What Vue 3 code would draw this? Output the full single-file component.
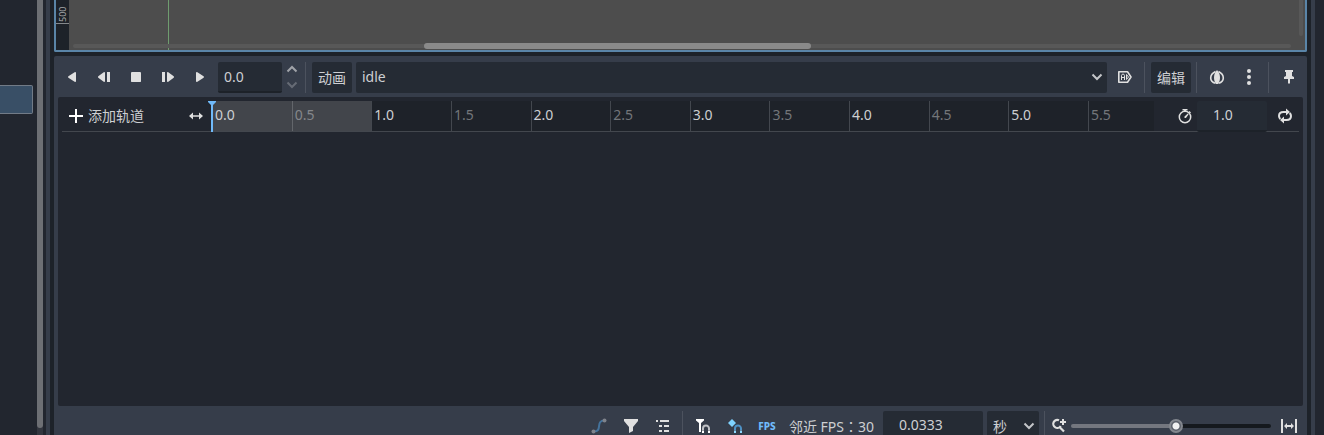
<script setup>
import { computed, ref } from 'vue'

const VISIBLE_SECONDS = 5.915
const STEP = 0.5

const position = ref('0.0')
const length = ref('1.0')
const snap = ref('0.0333')
const zoom = ref(527)
const animation = ref('idle')
const unit = ref('秒')

const ticks = Array.from({ length: 12 }, (_, i) => i * STEP)

const tickColumns = computed(() =>
  ticks.map((t) => `minmax(0, ${Math.min(STEP, VISIBLE_SECONDS - t).toFixed(3)}fr)`).join(' ')
)

const isInside = (t) => t < Number(length.value)

const zoomFill = computed(() => `${zoom.value / 10}%`)

const playButtons = [
  { label: '倒放', path: 'M12 3.4v9.2q-.6.6-1.4.2L4.4 8.8q-.8-.8 0-1.6l6.2-4q.8-.4 1.4.2z' },
  { label: '上一帧', path: 'M9 3.4v9.2q-.6.6-1.3.2L2.3 8.8q-.7-.8 0-1.6l5.4-4q.7-.4 1.3.2zM11 3h3v10h-3z' },
  { label: '停止', path: 'M3.5 3h9l.5.5v9l-.5.5h-9l-.5-.5v-9z' },
  { label: '下一帧', path: 'M7 3.4v9.2q.6.6 1.3.2l5.4-4q.7-.8 0-1.6l-5.4-4Q7.6 2.8 7 3.4zM2 3h3v10H2z' },
  { label: '播放', path: 'M4 3.4v9.2q.6.6 1.4.2l6.2-4q.8-.8 0-1.6l-6.2-4Q4.6 2.8 4 3.4z' },
]
</script>

<template>
  <div class="editor">
    <aside class="dock dock-left">
      <div class="dock-item"></div>
      <div class="dock-scroll"><div class="dock-thumb"></div></div>
    </aside>

    <main class="center">
      <section class="viewport">
        <div class="v-ruler"><span>500</span></div>
        <div class="canvas">
          <div class="axis"></div>
          <div class="h-scroll"><div class="h-thumb"></div></div>
          <div class="v-scroll"></div>
        </div>
      </section>

      <section class="panel">
        <div class="bar">
          <button v-for="b in playButtons" :key="b.label" class="icon-btn" :aria-label="b.label">
            <svg viewBox="0 0 16 16"><path :d="b.path" /></svg>
          </button>
          <div class="spin">
            <input v-model="position" class="field seek" aria-label="位置" />
            <div class="spin-arrows">
              <button aria-label="增加"><svg viewBox="0 0 12 8"><path d="M1.500 6.500L6 2l4.500 4.500" /></svg></button>
              <button class="dim" aria-label="减少"><svg viewBox="0 0 12 8"><path d="M1.500 1.500L6 6l4.500-4.500" /></svg></button>
            </div>
          </div>
          <i class="sep"></i>
          <button class="text-btn">动画</button>
          <div class="select grow">
            <select v-model="animation" aria-label="动画列表"><option>idle</option></select>
            <svg class="chevron" viewBox="0 0 16 16"><path d="M3.500 5.500L8 10l4.500-4.500" /></svg>
          </div>
          <button class="icon-btn" aria-label="自动播放">
            <svg viewBox="0 0 16 16">
              <path d="M1.800 2.800h8.700L14 8l-3.500 5.200H1.800z" fill="none" stroke="#e0e0e0" stroke-width="1.600" stroke-linejoin="round" />
              <path d="M4.500 11V6.500l1-1.500h1l1 1.500V11M4.500 8.500h3M9.500 5.500v5l2-2.500z" fill="none" stroke="#e0e0e0" />
            </svg>
          </button>
          <i class="sep"></i>
          <button class="text-btn">编辑</button>
          <i class="sep"></i>
          <button class="icon-btn" aria-label="洋葱皮">
            <svg viewBox="0 0 16 16">
              <path d="M8 1C5.500 4 5 6 5 9c0 2.500 1 4.500 2 6h2c1-1.500 2-3.500 2-6 0-3-.5-5-3-8z" />
              <path d="M6.500 2.500C3.500 4 1.700 6 1.700 9c0 2.500 1.800 4.500 4.800 5.300M9.500 2.500c3 1.500 4.800 3.500 4.800 6.500 0 2.500-1.800 4.500-4.800 5.300" fill="none" stroke="#e0e0e0" stroke-width="1.600" />
            </svg>
          </button>
          <button class="icon-btn" aria-label="选项">
            <svg viewBox="0 0 16 16"><circle cx="8" cy="2" r="2" /><circle cx="8" cy="8" r="2" /><circle cx="8" cy="14" r="2" /></svg>
          </button>
          <i class="sep"></i>
          <button class="icon-btn" aria-label="固定">
            <svg viewBox="0 0 16 16"><path d="M4 1h8v2h-1v4l2 1v2H9v4l-1 1-1-1v-4H3V8l2-1V3H4z" /></svg>
          </button>
        </div>

        <div class="tracks">
          <div class="time-row">
            <button class="add-track">
              <svg viewBox="0 0 16 16"><path d="M7 1h2v6h6v2H9v6H7V9H1V7h6z" fill="#fff" /></svg>
              添加轨道
            </button>
            <svg class="resize" viewBox="0 0 16 16">
              <path d="M1 8l4-3.500v2.700h6V4.500L15 8l-4 3.500V8.800H5v2.700z" />
            </svg>
            <div class="timeline" :style="{ gridTemplateColumns: tickColumns }">
              <span
                v-for="t in ticks"
                :key="t"
                class="tick"
                :class="{ minor: t % 1 !== 0, inside: isInside(t) }"
              >{{ t.toFixed(1) }}</span>
              <svg class="playhead" viewBox="0 0 8 31">
                <path d="M0 0h8v1L5 4v27H3V4L0 1z" />
              </svg>
            </div>
            <label class="length-icon" for="length" aria-label="动画长度">
              <svg viewBox="0 0 16 16">
                <circle cx="8" cy="9" r="5.700" fill="none" stroke="#e0e0e0" stroke-width="1.500" />
                <path d="M5.500 1h5v1.500H9V4H7V2.500H5.500zM12.500 3l1.500 1.500-1 1L11.500 4zM10.800 5.500l.8.8L9 10H7.500V8.500z" />
              </svg>
            </label>
            <input id="length" v-model="length" class="field length" />
            <button class="icon-btn loop" aria-label="循环">
              <svg viewBox="0 0 16 16">
                <path d="M3.300 11Q2 9.500 2 8q0-4 4.500-4H10M12.700 5Q14 6.500 14 8q0 4-4.500 4H6" fill="none" stroke="#e0e0e0" stroke-width="2" />
                <path d="M9 .5L13 4 9 7.500zM7 8.500L3 12l4 3.500z" />
              </svg>
            </button>
          </div>
        </div>

        <div class="bar footer">
          <button class="icon-btn" aria-label="贝塞尔曲线">
            <svg viewBox="0 0 16 16">
              <path d="M3 13.500c9 0 1-11 10.500-11" fill="none" stroke="#44739c" stroke-width="2" />
              <circle cx="2.500" cy="13.500" r="2" fill="#7f838b" /><circle cx="13.500" cy="2.500" r="2" fill="#7f838b" />
            </svg>
          </button>
          <button class="icon-btn" aria-label="筛选">
            <svg viewBox="0 0 16 16"><path d="M1 1h14v2l-5 6v4l-4 2V9L1 3z" /></svg>
          </button>
          <button class="icon-btn" aria-label="分组">
            <svg viewBox="0 0 16 16"><path d="M1 2h2v2H1zM5 2h9v2H5zM4 7h3v2H4zM9 7h5v2H9zM4 12h3v2H4zM9 12h5v2H9z" /></svg>
          </button>
          <i class="sep"></i>
          <button class="icon-btn" aria-label="时间轴吸附">
            <svg viewBox="0 0 16 16">
              <path d="M1 1h8v1.500L6 5v9H4V5L1 2.500z" fill="#fff" />
              <path d="M8 12v-1.500a3 3 0 0 1 6 0V12" fill="none" stroke="#bfc1c5" stroke-width="2" />
              <path d="M7 12.500h2V15H7zM13 12.500h2V15h-2z" fill="#fff" />
            </svg>
          </button>
          <button class="icon-btn" aria-label="关键帧吸附">
            <svg viewBox="0 0 16 16">
              <path d="M5 1l4 4-4 4-4-4z" fill="#7fd3ff" />
              <path d="M8 12v-1.500a3 3 0 0 1 6 0V12" fill="none" stroke="#4e91c4" stroke-width="2" />
              <path d="M7 12.500h2V15H7zM13 12.500h2V15h-2z" fill="#8cd8ff" />
            </svg>
          </button>
          <button class="icon-btn fps" aria-label="FPS 模式">FPS</button>
          <label class="snap-label" for="snap">邻近 FPS<span class="colon">：</span>30</label>
          <input id="snap" v-model="snap" class="field snap" />
          <div class="select unit">
            <select v-model="unit" aria-label="单位"><option>秒</option></select>
            <svg class="chevron" viewBox="0 0 16 16"><path d="M3.500 5.500L8 10l4.500-4.500" /></svg>
          </div>
          <i class="sep"></i>
          <svg class="zoom-icon" viewBox="0 0 16 16">
            <path d="M8 2.300A4 4 0 1 0 9.700 8M8.500 9l4.500 4.500" fill="none" stroke="#e0e0e0" stroke-width="2.200" />
            <path d="M11 1h2v2h2v2h-2v2h-2V5H9V3h2z" />
          </svg>
          <input
            v-model="zoom"
            class="zoom"
            type="range"
            min="0"
            max="1000"
            aria-label="缩放"
            :style="{ '--fill': zoomFill }"
          />
          <button class="icon-btn" aria-label="适应宽度">
            <svg viewBox="0 0 16 16"><path d="M0 1h2v14H0zM14 1h2v14h-2zM3 8l3-3v2h4V5l3 3-3 3V9H6v2z" /></svg>
          </button>
        </div>
      </section>
    </main>

    <aside class="dock dock-right"></aside>
  </div>
</template>

<style scoped>
.editor {
  --base: #363d4a;
  --dark: #22262f;
  --gap: #1d2229;
  --field: #252b34;
  --text: #cdcfd2;
  --icon: #e0e0e0;
  --accent: #70bafa;

  display: flex;
  height: 100vh;
  overflow: hidden;
  background: var(--gap);
  color: var(--text);
  font: 14px/20px 'Noto Sans', 'Noto Sans CJK SC', sans-serif;
}

* {
  box-sizing: border-box;
}

svg {
  display: block;
  flex: none;
  width: 16px;
  height: 16px;
  fill: var(--icon);
}

button,
input,
select {
  margin: 0;
  padding: 0;
  border: 0;
  border-radius: 0;
  background: none;
  color: inherit;
  font: inherit;
  outline: none;
}

.dock {
  flex: none;
  background: var(--dark);
}

.dock-left {
  display: flex;
  justify-content: space-between;
  width: 50px;
  padding-right: 3px;
  border-right: 4px solid var(--base);
}

.dock-item {
  width: 33px;
  height: 29px;
  margin-top: 85px;
  border: 1px solid #727b87;
  border-left: 0;
  border-radius: 0 2px 2px 0;
  background: #394f66;
}

.dock-scroll {
  width: 6px;
  padding-bottom: 7px;
  background: #33363f;
}

.dock-thumb {
  height: 100%;
  border-radius: 0 0 3px 3px;
  background: #6d6f74;
}

.dock-right {
  width: 13px;
  border-left: 4px solid var(--base);
}

.center {
  display: flex;
  flex: 1;
  flex-direction: column;
  gap: 4px;
  min-width: 0;
  padding: 0 4px;
}

.viewport {
  display: flex;
  flex: none;
  height: 52px;
  border: 2px solid #5a85a8;
  border-top: 0;
  border-radius: 0 0 2px 2px;
}

.v-ruler {
  width: 13px;
  height: 24px;
  border-bottom: 1px solid #85888c;
  color: #a5a7aa;
  font-size: 9px;
  line-height: 13px;
}

.v-ruler span {
  display: block;
  height: 22px;
  writing-mode: vertical-rl;
  transform: rotate(180deg);
}

.canvas {
  position: relative;
  flex: 1;
  background: #4d4d4d;
}

.axis {
  width: 1px;
  height: 100%;
  margin-left: 99px;
  background: #6f9d6f;
}

.h-scroll {
  position: absolute;
  right: 14px;
  bottom: 2px;
  left: 4px;
  height: 4px;
  border-radius: 2px;
  background: #585858;
}

.h-thumb {
  width: 31.8%;
  height: 6px;
  margin: -1px 0 0 28.8%;
  border-radius: 3px;
  background: #8a8a8a;
}

.v-scroll {
  position: absolute;
  top: 0;
  right: 2px;
  bottom: 14px;
  width: 4px;
  border-radius: 0 0 2px 2px;
  background: #585858;
}

.panel {
  display: flex;
  flex: 1;
  flex-direction: column;
  padding: 0 4px;
  border-radius: 2px 2px 0 0;
  background: var(--base);
}

.bar {
  display: flex;
  gap: 4px;
  height: 41px;
  padding: 6px 0 4px;
}

.icon-btn {
  display: flex;
  flex: none;
  align-items: center;
  justify-content: center;
  width: 28px;
  height: 30px;
}

.field {
  flex: none;
  height: 31px;
  padding: 0 6px;
  border-bottom: 2px solid var(--gap);
  border-radius: 2px;
  background: var(--field);
}

.spin {
  display: flex;
}

.seek {
  width: 64px;
}

.spin-arrows {
  display: flex;
  flex-direction: column;
  align-items: center;
  gap: 8px;
  width: 18px;
  padding: 3px 0 0 2px;
}

.spin-arrows svg {
  width: 12px;
  height: 8px;
  fill: none;
  stroke: #a0a3a9;
  stroke-width: 2;
}

.spin-arrows .dim {
  opacity: 0.45;
}

.sep {
  flex: none;
  width: 4px;
  height: 31px;
  border-left: 1px solid transparent;
  background: linear-gradient(#4c525e, #4c525e) no-repeat 0 0 / 1px 100%;
}

.text-btn {
  flex: none;
  width: 40px;
  height: 31px;
  border-radius: 2px;
  background: var(--field);
}

.select {
  position: relative;
  height: 31px;
}

.select select {
  width: 100%;
  height: 100%;
  padding: 0 6px 2px;
  appearance: none;
  border-radius: 2px;
  background: var(--field);
}

.grow {
  flex: 1;
}

.unit {
  width: 52px;
}

.unit select {
  padding-bottom: 0;
}

.chevron {
  position: absolute;
  top: 7px;
  right: 2px;
  fill: none;
  stroke: #c4c6c9;
  stroke-width: 2;
  pointer-events: none;
}

.tracks {
  flex: 1;
  padding: 4px;
  border-radius: 2px;
  background: var(--dark);
}

.time-row {
  display: flex;
  height: 31px;
  border-bottom: 1px solid #43474e;
}

.add-track {
  display: flex;
  align-items: center;
  gap: 4px;
  width: 126px;
  padding-left: 6px;
}

.resize {
  margin: 7px 8px 0 0;
}

.timeline {
  position: relative;
  display: grid;
  flex: 1;
  background: #1e2229;
}

.tick {
  padding-left: 2px;
  border-left: 1px solid #43474e;
  line-height: 28px;
}

.tick.inside {
  border-color: #63666b;
  background: #42454b;
}

.tick.minor {
  color: #73767a;
}

.tick.minor.inside {
  color: #85878b;
}

.playhead {
  position: absolute;
  top: 0;
  left: -4px;
  width: 8px;
  height: 31px;
  fill: var(--accent);
}

.length-icon {
  padding: 7px 4px 0 23px;
}

.length,
.snap {
  padding: 0 16px 2px;
}

.length {
  width: 70px;
}

.loop {
  margin-left: 4px;
}

.footer {
  justify-content: flex-end;
  height: 29px;
  padding: 5px 0 0;
}

.fps {
  color: var(--accent);
  font-size: 10px;
  font-weight: 800;
}

.snap-label {
  padding: 0 5px 0 4px;
  line-height: 30px;
}

.colon {
  font-family: 'Noto Sans CJK TC', sans-serif;
}

.snap {
  width: 100px;
}

.zoom-icon {
  margin-top: 7px;
}

.zoom {
  width: 200px;
  height: 30px;
  appearance: none;
}

.zoom::-webkit-slider-runnable-track {
  height: 4px;
  border-radius: 2px;
  background: linear-gradient(to right, #74777f var(--fill), #15191e var(--fill));
}

.zoom::-webkit-slider-thumb {
  width: 14px;
  height: 14px;
  margin-top: -5px;
  appearance: none;
  border: 2px solid #83878e;
  border-radius: 50%;
  background: radial-gradient(circle, #f2f2f2 3px, #5b606a 4px);
}
</style>

<style>
body {
  overflow: hidden;
}
</style>
